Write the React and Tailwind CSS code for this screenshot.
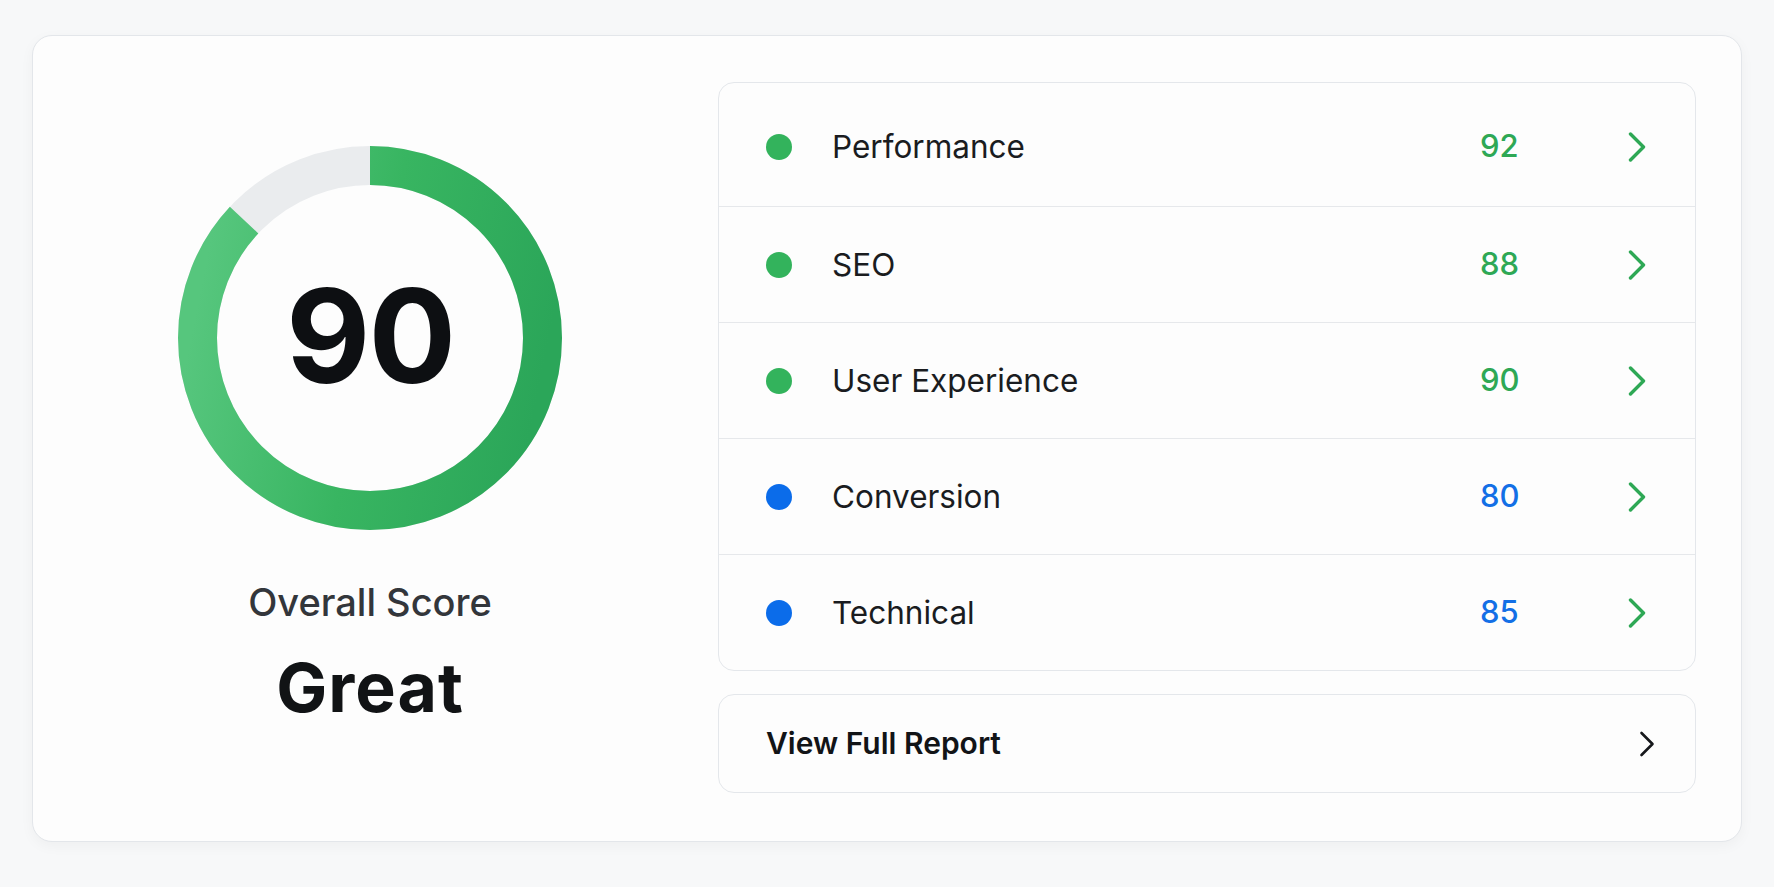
import React from 'react';

const categories = [
    { name: 'Performance', score: 92, tone: 'green' },
    { name: 'SEO', score: 88, tone: 'green' },
    { name: 'User Experience', score: 90, tone: 'green' },
    { name: 'Conversion', score: 80, tone: 'blue' },
    { name: 'Technical', score: 85, tone: 'blue' },
];

const RADIUS = 172.5;
const CIRC = 2 * Math.PI * RADIUS;

// ring: gray track underneath, green arc from 12 o'clock clockwise
// (circle is rotated -90deg, so the gradient runs along local y to read left -> right on screen)
const ScoreRing = ({ value }) => {
    const greenLen = (313 / 360) * CIRC;
    return (
        <div className="relative w-[384px] h-[384px]">
            <svg width="384" height="384" viewBox="0 0 384 384">
                <defs>
                    <linearGradient id="ringGreen" x1="0.6" y1="0" x2="0.4" y2="1">
                        <stop offset="0" stopColor="#56c67d" />
                        <stop offset="0.5" stopColor="#38b561" />
                        <stop offset="1" stopColor="#2ba659" />
                    </linearGradient>
                </defs>
                <circle cx="192" cy="192" r={RADIUS} fill="none" stroke="#eaecee" strokeWidth="39" />
                <circle
                    cx="192"
                    cy="192"
                    r={RADIUS}
                    fill="none"
                    stroke="url(#ringGreen)"
                    strokeWidth="39"
                    strokeDasharray={`${greenLen} ${CIRC}`}
                    transform="rotate(-90 192 192)"
                />
            </svg>
            <div className="absolute inset-0 flex items-center justify-center pb-[5px]">
                <span className="text-[130px] leading-none font-bold text-[#0d0f12] tracking-[-2px]">{value}</span>
            </div>
        </div>
    );
};

const Chevron = ({ color }) => (
    <svg width="18" height="30" viewBox="0 0 18 30" fill="none">
        <path d="M2.5 2 L15.5 15 L2.5 28" stroke={color} strokeWidth="3.4" strokeLinecap="round" strokeLinejoin="round" />
    </svg>
);

const App = () => {
    return (
        <div className="w-[1774px] h-[887px] bg-[#f7f8f9] pt-[35px] pl-[32px]" style={{ fontFamily: 'Inter, "Noto Sans", sans-serif' }}>
            <div className="w-[1710px] h-[807px] bg-[#fdfdfd] border border-[#e3e6ea] rounded-[20px] shadow-[0_4px_14px_rgba(0,0,0,0.04)] flex pt-[46px] pl-[45px] pr-[45px]">
                {/* 左侧总分 */}
                <div className="w-[584px] flex flex-col items-center pt-[64px]">
                    <ScoreRing value={90} />
                    <div className="mt-[53px] text-[38px] leading-none font-medium text-[#33363b]">Overall Score</div>
                    <div className="mt-[32px] text-[68px] leading-none font-bold text-[#111315] tracking-[1px]">Great</div>
                </div>

                {/* 右侧分类 */}
                <div className="ml-[56px] flex-1 flex flex-col">
                    <div className="border border-[#e4e7eb] rounded-[16px] bg-[#fdfdfd] flex flex-col">
                        {categories.map((c, i) => (
                            <div
                                key={c.name}
                                className={`flex items-center pl-[47px] pr-[49px] ${i === 0 ? 'h-[123px] pt-[4px]' : 'h-[116px] border-t border-[#e6e8eb]'}`}
                            >
                                <span className={`w-[26px] h-[26px] rounded-full ${c.tone === 'green' ? 'bg-[#33b35c]' : 'bg-[#0b6cea]'}`} />
                                <span className="ml-[40px] flex-1 text-[31.5px] text-[#1a1c1f]">{c.name}</span>
                                <span className={`w-[148px] text-[31px] font-medium ${c.tone === 'green' ? 'text-[#2ea855]' : 'text-[#136fe6]'}`}>{c.score}</span>
                                <Chevron color="#2ea855" />
                            </div>
                        ))}
                    </div>

                    <div className="mt-[23px] h-[99px] border border-[#e4e7eb] rounded-[16px] bg-[#fdfdfd] flex items-center justify-between pl-[47px] pr-[40px]">
                        <span className="text-[30px] font-semibold text-[#121417]">View Full Report</span>
                        <svg width="16" height="26" viewBox="0 0 16 26" fill="none">
                            <path d="M2.5 2 L13.5 13 L2.5 24" stroke="#16181b" strokeWidth="2.6" strokeLinecap="round" strokeLinejoin="round" />
                        </svg>
                    </div>
                </div>
            </div>
        </div>
    );
};

export default App;
